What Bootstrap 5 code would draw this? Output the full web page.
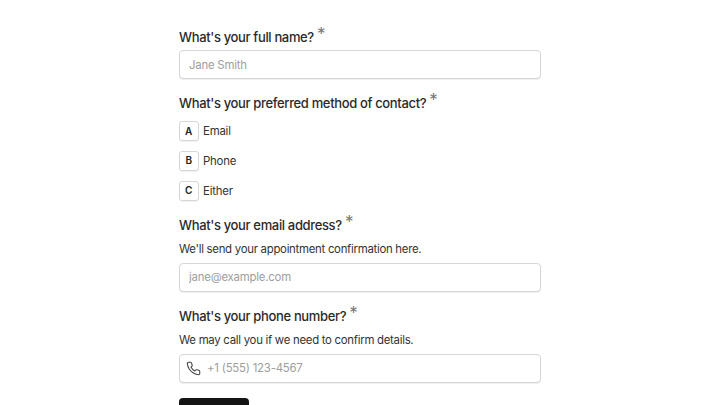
<!DOCTYPE html>
<html lang="en"><head><meta charset="utf-8">
<link href="https://cdn.jsdelivr.net/npm/bootstrap@5.3.0/dist/css/bootstrap.min.css" rel="stylesheet">
<style>
html,body{height:405px;overflow:hidden;background:#fff}
body{font-family:Inter,sans-serif;color:#1a1a1a}
.form-wrap{width:362px;margin:0 auto;padding-top:27px;gap:14px}
.q-label{font-size:13px;font-weight:500;line-height:20px;margin:0;color:#2a2a2a;letter-spacing:-.35px}
.req{font-size:17px;color:#777;font-weight:400;line-height:0;vertical-align:2px;margin-left:0}
.name-gap{margin-bottom:3px}
.q-input{height:29px;border:1.5px solid #d6d6d6;border-radius:4px;font-size:11.4px;padding:0 9px;color:#222;box-shadow:0 1px 1px rgba(0,0,0,.06);letter-spacing:-.22px}
.q-input::placeholder{color:#9e9e9e}
.hint-text{font-size:11.4px;line-height:18px;color:#333;margin:5px 0 5px;letter-spacing:-.28px}
.key-box{width:19.5px;height:20px;border:1.5px solid #d6d6d6;border-radius:3px;font-size:10px;font-weight:600;color:#222;box-shadow:0 1px 1px rgba(0,0,0,.06)}
.opt-text{font-size:11.4px;line-height:20px;color:#333;letter-spacing:-.2px}
.opt-list{gap:9.75px;margin-top:8px}
.opt-row{gap:4.5px}
.ico{left:7px;top:7px;width:15px;height:15px}
.pad-ico{padding-left:27px}
.go-btn{width:70px;height:30px;background:#141414;border-radius:4px;border:0;margin-top:1px}
</style></head><body>
<form class="form-wrap d-flex flex-column align-items-stretch">
<div>
<label class="q-label d-block name-gap">What's your full name? <span class="req">*</span></label>
<input class="form-control q-input" placeholder="Jane Smith">
</div>
<div>
<div class="q-label">What's your preferred method of contact? <span class="req">*</span></div>
<div class="d-flex flex-column opt-list">
<div class="d-flex align-items-center opt-row"><span class="key-box d-flex align-items-center justify-content-center">A</span><span class="opt-text">Email</span></div>
<div class="d-flex align-items-center opt-row"><span class="key-box d-flex align-items-center justify-content-center">B</span><span class="opt-text">Phone</span></div>
<div class="d-flex align-items-center opt-row"><span class="key-box d-flex align-items-center justify-content-center">C</span><span class="opt-text">Either</span></div>
</div>
</div>
<div>
<label class="q-label d-block">What's your email address? <span class="req">*</span></label>
<p class="hint-text">We'll send your appointment confirmation here.</p>
<input class="form-control q-input" placeholder="jane@example.com">
</div>
<div>
<label class="q-label d-block">What's your phone number? <span class="req">*</span></label>
<p class="hint-text">We may call you if we need to confirm details.</p>
<div class="position-relative">
<svg class="ico position-absolute" viewBox="0 0 24 24" fill="none" stroke="#444" stroke-width="1.7" stroke-linecap="round" stroke-linejoin="round"><path d="M22 16.92v3a2 2 0 0 1-2.18 2 19.79 19.79 0 0 1-8.63-3.07 19.5 19.5 0 0 1-6-6 19.79 19.79 0 0 1-3.07-8.67A2 2 0 0 1 4.11 2h3a2 2 0 0 1 2 1.72 12.84 12.84 0 0 0 .7 2.81 2 2 0 0 1-.45 2.11L8.09 9.91a16 16 0 0 0 6 6l1.27-1.27a2 2 0 0 1 2.11-.45 12.84 12.84 0 0 0 2.81.7A2 2 0 0 1 22 16.92z"/></svg>
<input class="form-control q-input pad-ico" placeholder="+1 (555) 123-4567">
</div>
</div>
<div><button type="button" class="btn go-btn"></button></div>
</form>
<script src="https://cdn.jsdelivr.net/npm/bootstrap@5.3.0/dist/js/bootstrap.bundle.min.js"></script>
</body></html>
